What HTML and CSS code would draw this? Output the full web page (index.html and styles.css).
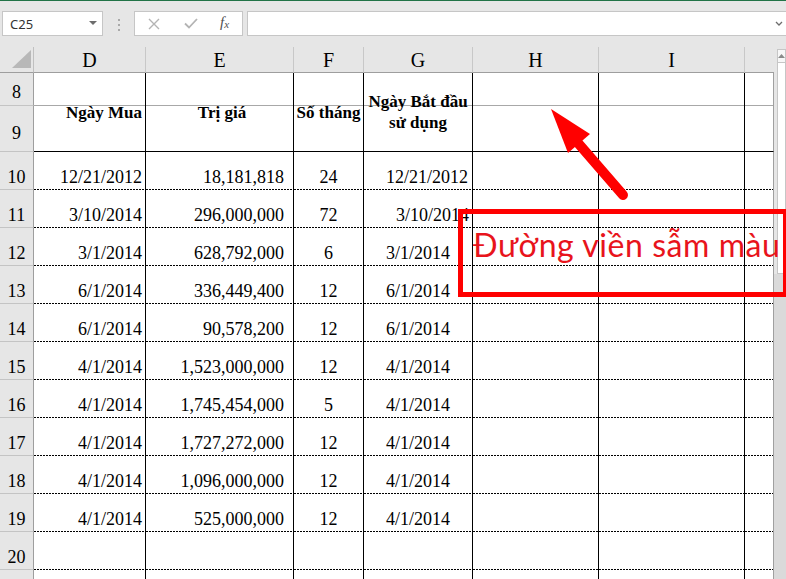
FILE: index.html
```html
<!DOCTYPE html>
<html lang="vi">
<head>
<meta charset="utf-8">
<title>Excel</title>
<link rel="stylesheet" href="styles.css">
</head>
<body>
<div class="app">
  <div class="topline"></div>
  <div class="toolbar">
    <div class="namebox"><span>C25</span>
      <svg class="nb-caret" width="8" height="5" viewBox="0 0 8 5"><polygon points="0,0 8,0 4,4" fill="#6d6d6d"/></svg>
    </div>
    <div class="grip"><i></i><i></i><i></i></div>
    <div class="fbuttons">
      <svg class="fb-x" width="12" height="12" viewBox="0 0 12 12"><path d="M1 1 L11 11 M11 1 L1 11" stroke="#b4b4b4" stroke-width="1.4" fill="none"/></svg>
      <svg class="fb-check" width="14" height="11" viewBox="0 0 14 11"><path d="M1 5.5 L5 9.5 L13 1" stroke="#b4b4b4" stroke-width="1.8" fill="none"/></svg>
      <span class="fx">f<sub>x</sub></span>
    </div>
    <div class="formula">
      <svg class="fm-chev" width="8" height="5" viewBox="0 0 8 5"><path d="M1 1 L4 4 L7 1" stroke="#6d6d6d" stroke-width="1.3" fill="none"/></svg>
    </div>
  </div>

  <div class="sheet">
    <div class="grid">
      <div class="corner"><svg width="34" height="26" viewBox="0 0 34 26"><polygon points="12,21 31,21 31,3" fill="#b8b8b8"/></svg></div>
      <div class="ch">D</div><div class="ch">E</div><div class="ch">F</div><div class="ch">G</div><div class="ch">H</div><div class="ch">I</div><div class="ch last"></div>

      <div class="rh r8">8</div>
      <div class="hd hd-d">Ngày Mua</div>
      <div class="hd hd-e">Trị giá</div>
      <div class="hd hd-f">Số tháng</div>
      <div class="hd hd-g">Ngày Bắt đầu<br>sử dụng</div>
      <div class="hd"></div>
      <div class="hd"></div>
      <div class="hd j"></div>
      <div class="rh r9">9</div>

      <div class="rh">10</div><div class="c d">12/21/2012</div><div class="c e">18,181,818</div><div class="c f">24</div><div class="c g">12/21/2012</div><div class="c"></div><div class="c"></div><div class="c j"></div>
      <div class="rh">11</div><div class="c d">3/10/2014</div><div class="c e">296,000,000</div><div class="c f">72</div><div class="c g shift">3/10/2014</div><div class="c"></div><div class="c"></div><div class="c j"></div>
      <div class="rh">12</div><div class="c d">3/1/2014</div><div class="c e">628,792,000</div><div class="c f">6</div><div class="c g">3/1/2014</div><div class="c"></div><div class="c"></div><div class="c j"></div>
      <div class="rh">13</div><div class="c d">6/1/2014</div><div class="c e">336,449,400</div><div class="c f">12</div><div class="c g">6/1/2014</div><div class="c"></div><div class="c"></div><div class="c j"></div>
      <div class="rh">14</div><div class="c d">6/1/2014</div><div class="c e">90,578,200</div><div class="c f">12</div><div class="c g">6/1/2014</div><div class="c"></div><div class="c"></div><div class="c j"></div>
      <div class="rh">15</div><div class="c d">4/1/2014</div><div class="c e">1,523,000,000</div><div class="c f">12</div><div class="c g">4/1/2014</div><div class="c"></div><div class="c"></div><div class="c j"></div>
      <div class="rh">16</div><div class="c d">4/1/2014</div><div class="c e">1,745,454,000</div><div class="c f">5</div><div class="c g">4/1/2014</div><div class="c"></div><div class="c"></div><div class="c j"></div>
      <div class="rh">17</div><div class="c d">4/1/2014</div><div class="c e">1,727,272,000</div><div class="c f">12</div><div class="c g">4/1/2014</div><div class="c"></div><div class="c"></div><div class="c j"></div>
      <div class="rh">18</div><div class="c d">4/1/2014</div><div class="c e">1,096,000,000</div><div class="c f">12</div><div class="c g">4/1/2014</div><div class="c"></div><div class="c"></div><div class="c j"></div>
      <div class="rh">19</div><div class="c d">4/1/2014</div><div class="c e">525,000,000</div><div class="c f">12</div><div class="c g">4/1/2014</div><div class="c"></div><div class="c"></div><div class="c j"></div>
      <div class="rh">20</div><div class="c d"></div><div class="c e"></div><div class="c f"></div><div class="c g"></div><div class="c"></div><div class="c"></div><div class="c j"></div>
      <div class="rh"></div><div class="c d"></div><div class="c e"></div><div class="c f"></div><div class="c g"></div><div class="c"></div><div class="c"></div><div class="c j"></div>
    </div>
    <div class="vscroll">
      <div class="vbtn"><svg width="7" height="4" viewBox="0 0 7 4"><polygon points="0,4 7,4 3.5,0" fill="#8a8a8a"/></svg></div>
      <div class="vthumb"></div>
      <div class="vtrack"></div>
    </div>
  </div>

  <svg class="arrow" width="100" height="110" viewBox="0 0 100 110">
    <line x1="38" y1="43" x2="83" y2="95" stroke="#ff0000" stroke-width="10" stroke-linecap="round"/>
    <polygon points="11,9 28,53 50,34" fill="#ff0000"/>
  </svg>
  <div class="callout">Đường viền sẫm màu</div>
</div>
</body>
</html>
```

FILE: styles.css
```css
* { box-sizing: border-box; }
html, body { margin: 0; padding: 0; }
body {
  width: 786px;
  height: 579px;
  overflow: hidden;
  background: #ffffff;
  font-family: "Liberation Serif", "Times New Roman", serif;
  color: #000;
}
.app {
  position: relative;
  width: 786px;
  height: 579px;
  overflow: hidden;
}
.topline { height: 1px; background: #217346; }

/* formula bar */
.toolbar {
  height: 46px;
  background: #e6e6e6;
  display: flex;
  align-items: flex-start;
  padding: 10px 0 0 2px;
}
.namebox {
  width: 101px;
  height: 25px;
  background: #fff;
  border: 1px solid #c6c6c6;
  display: flex;
  align-items: center;
  justify-content: space-between;
  padding: 0 5px 0 7px;
  font: 13px "Noto Sans", "Open Sans", sans-serif;
  color: #333;
}
.grip {
  width: 2px;
  margin: 8px 14px 0 15px;
  display: flex;
  flex-direction: column;
  gap: 3px;
}
.grip i { display: block; width: 2px; height: 2px; background: #a9a9a9; }
.fbuttons {
  width: 109px;
  height: 25px;
  background: #fff;
  border: 1px solid #c6c6c6;
  display: flex;
  align-items: center;
  padding-left: 13px;
}
.fb-x { margin-right: 24px; }
.fb-check { margin-right: 22px; }
.fx {
  font: italic 15px "Liberation Serif", serif;
  color: #505050;
  line-height: 15px;
}
.fx sub { font-size: 11px; vertical-align: -1px; }
.formula {
  flex: 1;
  height: 25px;
  margin-left: 4px;
  background: #fff;
  border: 1px solid #c6c6c6;
  border-right: none;
  display: flex;
  align-items: center;
  justify-content: flex-end;
  padding-right: 3px;
}

/* sheet */
.sheet { display: flex; height: 532px; }
.grid {
  width: 774px;
  display: grid;
  grid-template-columns: 34px 112px 148px 70px 109px 126px 146px 29px;
  grid-template-rows: 26px 33px 46px repeat(12, 38px);
}
.corner {
  background: #e6e6e6;
  border-right: 1px solid #c0c0c0;
  border-bottom: 1px solid #9e9e9e;
}
.corner svg { display: block; }
.ch {
  background: #e6e6e6;
  border-right: 1px solid #c8c8c8;
  border-bottom: 1px solid #9e9e9e;
  display: flex;
  align-items: center;
  justify-content: center;
  font-size: 20px;
  padding-top: 1px;
}
.ch.last { border-right: none; }
.rh {
  background: #e6e6e6;
  border-right: 1px solid #9e9e9e;
  border-bottom: 1px solid #c4c4c4;
  display: flex;
  align-items: flex-end;
  justify-content: center;
  font-size: 18px;
  line-height: 20px;
  padding-bottom: 2px;
}
.rh.r8 { padding-bottom: 3px; }
.rh.r9 { padding-bottom: 8px; }

.hd {
  grid-row: span 2;
  border-right: 1px solid #000;
  border-bottom: 1px solid #000;
  background: linear-gradient(#a8a8a8, #a8a8a8) 0 32px / 100% 1px no-repeat;
  display: flex;
  align-items: center;
  font-weight: bold;
  font-size: 17px;
  line-height: 21px;
  white-space: nowrap;
}
.hd-d { justify-content: flex-end; padding-right: 3px; }
.hd-e { justify-content: center; padding-left: 5px; }
.hd-f { justify-content: center; }
.hd-g { justify-content: center; text-align: center; }

.c {
  border-right: 1px solid #000;
  background: repeating-linear-gradient(90deg, #000 0 2px, transparent 2px 3px) left bottom / 100% 1px no-repeat;
  display: flex;
  align-items: flex-end;
  font-size: 18px;
  line-height: 20px;
  padding-bottom: 3px;
  white-space: nowrap;
  overflow: visible;
}
.c.d { justify-content: flex-end; padding-right: 3px; }
.c.e { justify-content: flex-end; padding-right: 9px; }
.c.f { justify-content: center; }
.c.g { padding-left: 22px; }
.c.g.shift { padding-left: 32px; }
.j, .c.j { border-right-color: #a0a0a0; }

/* scrollbar */
.vscroll {
  width: 12px;
  background: #e6e6e6;
  display: flex;
  flex-direction: column;
  padding: 2px 0 0 3px;
}
.vbtn {
  height: 14px;
  background: #f7f7f7;
  border: 1px solid #c6c6c6;
  display: flex;
  justify-content: center;
  padding-top: 4px;
}
.vbtn svg { display: block; }
.vthumb {
  height: 211px;
  background: #fff;
  border: 1px solid #c6c6c6;
  border-top: none;
}
.vtrack {
  flex: 1;
  margin-left: -3px;
  background: #dadada;
}

/* annotation overlays */
.arrow {
  position: absolute;
  left: 540px;
  top: 100px;
}
.callout {
  position: absolute;
  left: 458px;
  top: 209px;
  width: 330px;
  height: 88px;
  border: 5px solid #ff0000;
  padding: 12px 0 0 10px;
  font-family: "Lato", "Open Sans", sans-serif;
  font-size: 32px;
  line-height: 37px;
  letter-spacing: 0.55px;
  color: #e8141c;
  white-space: nowrap;
}
```
